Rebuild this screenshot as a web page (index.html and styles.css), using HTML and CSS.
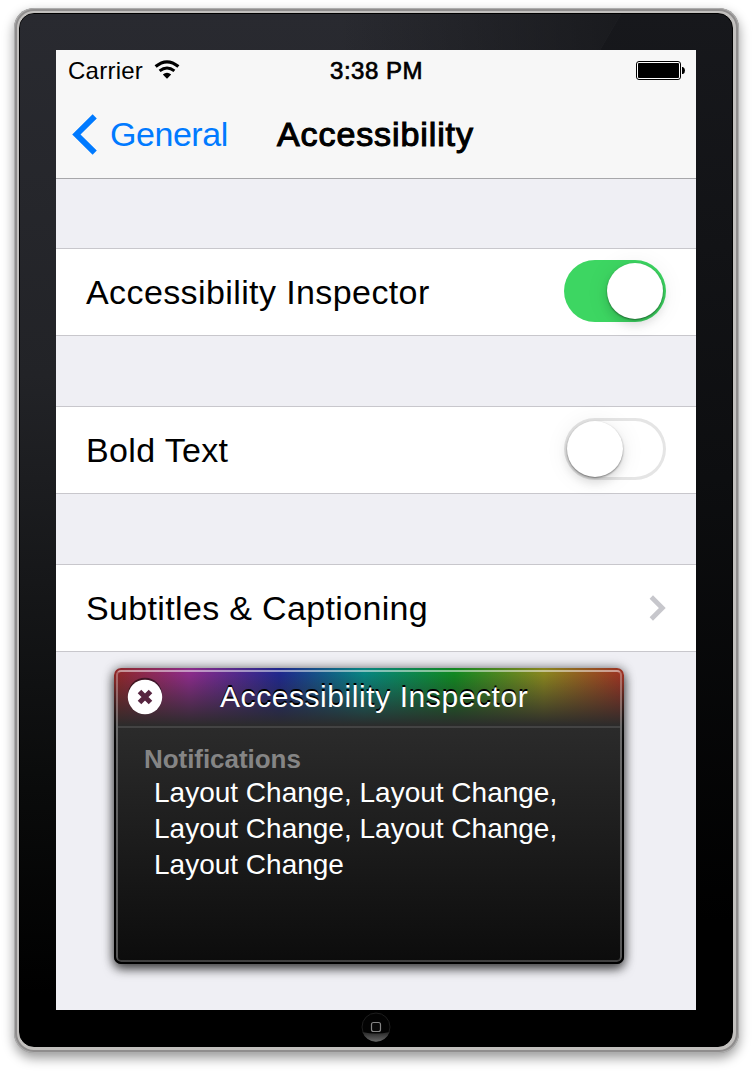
FILE: index.html
```html
<!DOCTYPE html>
<html lang="en">
<head>
<meta charset="utf-8">
<title>Accessibility</title>
<link rel="stylesheet" href="styles.css">
</head>
<body>
<div class="device">
  <div class="bezel">
    <main class="screen">
      <header class="header">
        <div class="status">
          <div class="carrier"><span class="carrier-name">Carrier</span>
            <svg class="wifi" width="26" height="20" viewBox="0 0 26 20"><path d="M1.600 6.600Q13-2.800 24.400 6.600" fill="none" stroke="#000" stroke-width="3.200"/><path d="M5.600 10.900Q13 5 20.400 10.900" fill="none" stroke="#000" stroke-width="3"/><path d="M8.800 14.600Q13 11 17.200 14.600L13 18.800Z"/></svg>
          </div>
          <span class="time">3:38 PM</span>
          <svg class="battery" width="49" height="19" viewBox="0 0 49 19"><rect x=".5" y=".5" width="44" height="18" rx="2.5" fill="#fff" stroke="#000"/><rect x="2" y="2" width="41" height="15" rx="1"/><path d="M46 6h1q2 1 2 3.500t-2 3.500h-1z"/></svg>
        </div>
        <nav class="nav">
          <a class="back"><svg width="25" height="41" viewBox="0 0 25 41"><path d="M22.700 2.300 4.400 20.500l18.300 18.200" fill="none" stroke="#007aff" stroke-width="5.900"/></svg><span class="back-label">General</span></a>
          <h1 class="title">Accessibility</h1>
        </nav>
      </header>
      <section class="row"><span class="label label-inspector">Accessibility Inspector</span><span class="switch on"><i class="knob"></i></span></section>
      <section class="row"><span class="label label-bold">Bold Text</span><span class="switch"><i class="knob"></i></span></section>
      <section class="row"><span class="label label-subtitles">Subtitles &amp; Captioning</span><svg class="chevron" width="17" height="26" viewBox="0 0 17 26"><path d="M2.300 2 13.300 13 2.300 24" fill="none" stroke="#c7c7cc" stroke-width="4.800"/></svg></section>
      <aside class="inspector">
        <div class="inspector-inner">
          <div class="inspector-head">
            <svg class="close" width="36" height="36" viewBox="0 0 36 36"><circle cx="18" cy="18" r="17.200" fill="#fff"/><path d="m12.500 12.500 11 11m0-11-11 11" stroke="#572540" stroke-width="5"/></svg>
            <h2 class="inspector-title">Accessibility Inspector</h2>
          </div>
          <div class="inspector-body">
            <h3 class="subhead">Notifications</h3>
            <p class="events">Layout Change, Layout Change,<br>Layout Change, Layout Change,<br>Layout Change</p>
          </div>
        </div>
      </aside>
    </main>
    <svg class="home" width="30" height="30" viewBox="0 0 30 30"><defs><linearGradient id="shine" x2="0" y2="1"><stop offset="0" stop-color="#262626"/><stop offset="1" stop-color="#686868"/></linearGradient></defs><circle cx="15" cy="15" r="14" fill="#030303" stroke="#1d1d1d"/><path d="M1.500 20Q15 23 28.500 20A14.200 14.200 0 0 1 1.500 20Z" fill="url(#shine)"/><rect x="10.500" y="10.500" width="9" height="9" rx="2" fill="#080808" stroke="#858585" stroke-width="1.200"/></svg>
  </div>
</div>
</body>
</html>
```
FILE: styles.css
```css
* { box-sizing: border-box; }
body {
  margin: 0;
  padding: 8px 13px 0 14px;
  height: 1072px;
  overflow: hidden;
  background: #fff;
  font-family: "Liberation Sans", Arial, sans-serif;
  color: #000;
}
h1, h2, h3, p { margin: 0; font-weight: 400; }
svg { display: block; flex: none; }
.device {
  width: 725px;
  height: 1045px;
  padding: 5px 6px 6px 5px;
  border-radius: 20px;
  background: #c2c0be;
  box-shadow: inset 0 0 0 1px #adadad, inset 0 0 0 3px #8f8d8d, 0 5px 12px rgba(0, 0, 0, .4);
}
.bezel {
  position: relative;
  height: 1034px;
  padding: 36px 36px 0;
  border: 1px solid #000;
  border-radius: 15px;
  background: linear-gradient(180deg, #17181c 0, #0d0e10 45%, #000 88%);
  overflow: hidden;
}
.bezel::before {
  content: "";
  position: absolute;
  inset: 0;
  background:
    linear-gradient(90deg, transparent 45%, rgba(21, 22, 25, .8) 86%),
    linear-gradient(180deg, #292a30 0, #222327 35%, #0a0b0b 75%, #000 95%);
  clip-path: polygon(0 0, 601px 0, 0 1034px);
}
.screen {
  position: relative;
  width: 640px;
  height: 960px;
  background: #efeff4;
}
.header {
  height: 129px;
  background: #f7f7f7;
  border-bottom: 1px solid #a7a7aa;
  margin-bottom: 69px;
}
.status {
  height: 40px;
  padding: 0 11px 0 12px;
  display: grid;
  grid-template-columns: 1fr auto 1fr;
  align-items: center;
  font-size: 24px;
  line-height: 40px;
}
.carrier { display: flex; align-items: center; gap: 11px; }
.carrier-name { letter-spacing: .25px; position: relative; top: 1px; }
.time { -webkit-text-stroke: .7px #000; letter-spacing: .5px; position: relative; top: 1px; }
.battery { justify-self: end; }
.nav {
  height: 88px;
  display: flex;
  align-items: center;
  padding: 0 16px;
  font-size: 34px;
}
.back { display: flex; align-items: center; color: #007aff; width: 205px; gap: 13px; }
.back-label { letter-spacing: -.45px; }
.title { font-size: 34px; letter-spacing: .9px; -webkit-text-stroke: 1.1px #000; }
.row {
  height: 88px;
  margin-bottom: 70px;
  padding: 0 30px;
  display: flex;
  align-items: center;
  justify-content: space-between;
  background: #fff;
  border: solid #c8c7cc;
  border-width: 1px 0;
  font-size: 34px;
}
.label-inspector { letter-spacing: .4px; }
.label-bold { letter-spacing: .35px; }
.label-subtitles { letter-spacing: .34px; }
.switch {
  width: 102px;
  height: 62px;
  padding: 3px;
  border-radius: 31px;
  box-shadow: inset 0 0 0 3px #e5e5e5;
  display: flex;
  position: relative;
  top: -1px;
}
.on { justify-content: flex-end; background: #3dd662; box-shadow: none; }
.knob {
  width: 56px;
  height: 56px;
  border-radius: 50%;
  background: #fff;
  box-shadow: 0 1px 2px rgba(0, 0, 0, .45), 0 6px 10px rgba(0, 0, 0, .11), 0 2px 24px rgba(0, 0, 0, .08);
}
.inspector {
  position: absolute;
  left: 58px;
  top: 618px;
  width: 510px;
  height: 296px;
  padding: 2px;
  border-radius: 7px;
  background:
    linear-gradient(180deg, transparent 6px, #2b2b2b 58px),
    linear-gradient(90deg, #8d2725 0, #8b2b89 75px, #20278c 165px, #078480 250px, #118721 340px, #88841e 430px, #9b3023 100%);
  box-shadow: 0 5px 11px rgba(0, 0, 0, .65), 0 0 12px rgba(0, 0, 0, .4);
}
.inspector::before {
  content: "";
  position: absolute;
  inset: 58px 0 0;
  border-radius: 0 0 7px 7px;
  background: linear-gradient(180deg, #2b2b2b, #0c0c0c);
}
.inspector::after {
  content: "";
  position: absolute;
  inset: 0;
  border-radius: 7px;
  background: linear-gradient(180deg, transparent 15px, rgba(0, 0, 0, .8) 75px, #000);
  padding: 0 2px 2px;
  mask: linear-gradient(#000 0 0) content-box exclude, linear-gradient(#000 0 0);
}
.inspector-inner {
  position: relative;
  height: 292px;
  border: 2px solid;
  border-color: rgba(255, 255, 255, .5) rgba(255, 255, 255, .3) rgba(255, 255, 255, .22);
  border-radius: 5px;
}
.inspector-head {
  height: 56px;
  padding: 0 9px 4px;
  border-bottom: 2px solid #434343;
  display: flex;
  align-items: center;
}
.close { filter: drop-shadow(0 -2px 0 rgba(0, 0, 0, .5)); }
.inspector-title {
  margin-left: 57px;
  font-size: 30px;
  letter-spacing: .57px;
  color: #fff;
  text-shadow: 0 -2px 0 #000;
  white-space: nowrap;
}
.inspector-body { padding: 16px 26px; }
.subhead { font-size: 26px; line-height: 30px; font-weight: 700; letter-spacing: -.05px; color: #858585; }
.events { margin-top: 1px; padding-left: 10px; font-size: 28px; line-height: 36px; color: #fff; white-space: nowrap; }
.home { position: relative; margin: 2px 0 0 304.6px; }
```
